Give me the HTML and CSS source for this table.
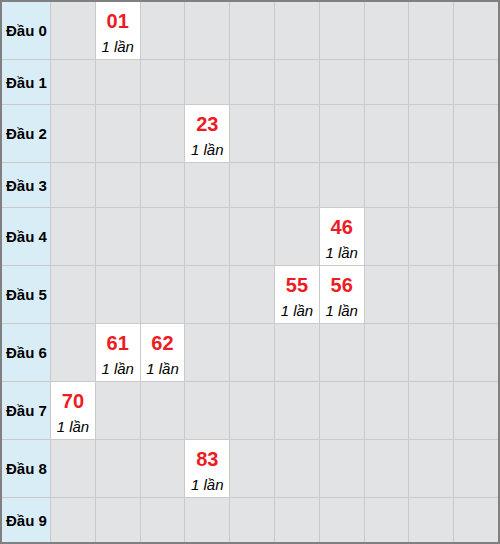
FILE: index.html
```html
<!DOCTYPE html>
<html lang="vi">
<head>
<meta charset="utf-8">
<link rel="stylesheet" href="styles.css">
</head>
<body>
<div class="board">
  <div class="label">Đầu 0</div>
  <div class="cell"></div>
  <div class="cell hit"><span class="num">01</span><span class="cnt">1 lần</span></div>
  <div class="cell"></div><div class="cell"></div><div class="cell"></div><div class="cell"></div><div class="cell"></div><div class="cell"></div><div class="cell"></div><div class="cell"></div>

  <div class="label">Đầu 1</div>
  <div class="cell"></div><div class="cell"></div><div class="cell"></div><div class="cell"></div><div class="cell"></div><div class="cell"></div><div class="cell"></div><div class="cell"></div><div class="cell"></div><div class="cell"></div>

  <div class="label">Đầu 2</div>
  <div class="cell"></div><div class="cell"></div><div class="cell"></div>
  <div class="cell hit"><span class="num">23</span><span class="cnt">1 lần</span></div>
  <div class="cell"></div><div class="cell"></div><div class="cell"></div><div class="cell"></div><div class="cell"></div><div class="cell"></div>

  <div class="label">Đầu 3</div>
  <div class="cell"></div><div class="cell"></div><div class="cell"></div><div class="cell"></div><div class="cell"></div><div class="cell"></div><div class="cell"></div><div class="cell"></div><div class="cell"></div><div class="cell"></div>

  <div class="label">Đầu 4</div>
  <div class="cell"></div><div class="cell"></div><div class="cell"></div><div class="cell"></div><div class="cell"></div><div class="cell"></div>
  <div class="cell hit"><span class="num">46</span><span class="cnt">1 lần</span></div>
  <div class="cell"></div><div class="cell"></div><div class="cell"></div>

  <div class="label">Đầu 5</div>
  <div class="cell"></div><div class="cell"></div><div class="cell"></div><div class="cell"></div><div class="cell"></div>
  <div class="cell hit"><span class="num">55</span><span class="cnt">1 lần</span></div>
  <div class="cell hit"><span class="num">56</span><span class="cnt">1 lần</span></div>
  <div class="cell"></div><div class="cell"></div><div class="cell"></div>

  <div class="label">Đầu 6</div>
  <div class="cell"></div>
  <div class="cell hit"><span class="num">61</span><span class="cnt">1 lần</span></div>
  <div class="cell hit"><span class="num">62</span><span class="cnt">1 lần</span></div>
  <div class="cell"></div><div class="cell"></div><div class="cell"></div><div class="cell"></div><div class="cell"></div><div class="cell"></div><div class="cell"></div>

  <div class="label">Đầu 7</div>
  <div class="cell hit"><span class="num">70</span><span class="cnt">1 lần</span></div>
  <div class="cell"></div><div class="cell"></div><div class="cell"></div><div class="cell"></div><div class="cell"></div><div class="cell"></div><div class="cell"></div><div class="cell"></div><div class="cell"></div>

  <div class="label">Đầu 8</div>
  <div class="cell"></div><div class="cell"></div><div class="cell"></div>
  <div class="cell hit"><span class="num">83</span><span class="cnt">1 lần</span></div>
  <div class="cell"></div><div class="cell"></div><div class="cell"></div><div class="cell"></div><div class="cell"></div><div class="cell"></div>

  <div class="label">Đầu 9</div>
  <div class="cell"></div><div class="cell"></div><div class="cell"></div><div class="cell"></div><div class="cell"></div><div class="cell"></div><div class="cell"></div><div class="cell"></div><div class="cell"></div><div class="cell"></div>
</div>
</body>
</html>
```

FILE: styles.css
```css
html, body {
  margin: 0;
  padding: 0;
  background: #ffffff;
}

body {
  font-family: "Liberation Sans", Arial, sans-serif;
}

.board {
  width: 500px;
  height: 544px;
  box-sizing: border-box;
  border: 2px solid #808080;
  background: #cacaca;
  display: grid;
  grid-template-columns: 48px repeat(10, 1fr);
  grid-template-rows: 57px 44px 57px 44px 57px 57px 57px 57px 57px 44px;
  column-gap: 1px;
  row-gap: 1px;
}

.label {
  background: #d9edf7;
  color: #000000;
  font-weight: bold;
  font-size: 15px;
  display: flex;
  align-items: center;
  padding-left: 4px;
  white-space: nowrap;
}

.cell {
  background: #e2e3e5;
}

.cell.hit {
  background: #ffffff;
  display: flex;
  flex-direction: column;
  align-items: center;
  box-sizing: border-box;
  padding-top: 5px;
}

.num {
  color: #ed1c24;
  font-weight: bold;
  font-size: 20px;
  line-height: 28px;
}

.cnt {
  color: #000000;
  font-style: italic;
  font-size: 15px;
  line-height: 23px;
  white-space: nowrap;
}
```
